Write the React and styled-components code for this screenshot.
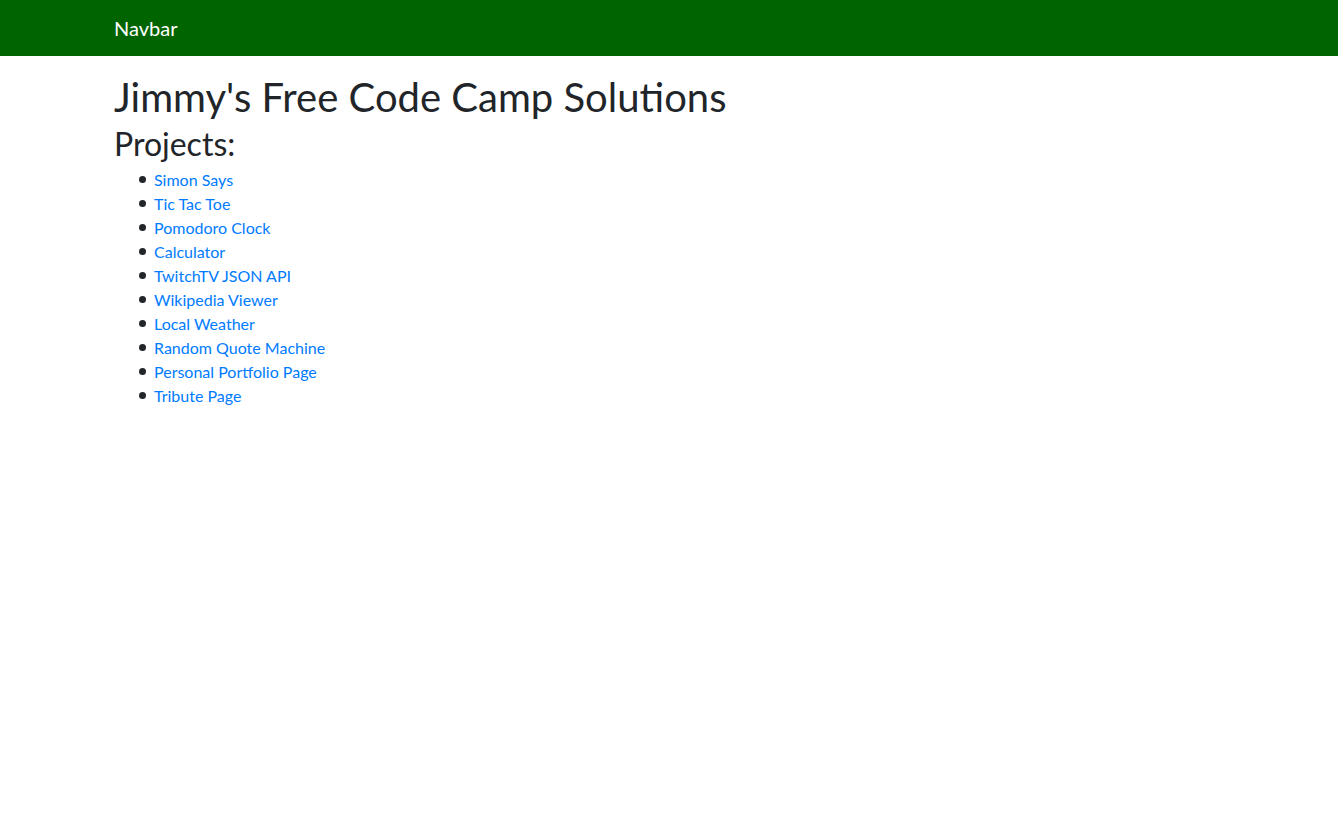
import React from "react";
import styled, { createGlobalStyle } from "styled-components";

const GlobalStyle = createGlobalStyle`
  *, *::before, *::after { box-sizing: border-box; }
  html, body { margin: 0; padding: 0; background: #fff; }
  body {
    font-family: Lato, "Open Sans", "Liberation Sans", sans-serif;
    font-size: 16px;
    line-height: 1.5;
    color: #212529;
  }
`;

const Navbar = styled.nav`
  background: #006400;
  height: 56px;
  display: flex;
  align-items: center;
  padding: 8px 16px;
`;

const Container = styled.div`
  width: 100%;
  max-width: 1140px;
  margin: 0 auto;
  padding: 0 15px;
`;

const NavContainer = styled(Container)`
  display: flex;
  align-items: center;
`;

const Brand = styled.a`
  color: #fff;
  font-size: 20px;
  line-height: 30px;
  padding: 5px 0;
  text-decoration: none;
  margin-right: 16px;
`;

const Title = styled.h1`
  margin: 17px 0 4px;
  font-size: 40px;
  font-weight: 400;
  line-height: 48px;
`;

const Subtitle = styled.h2`
  margin: 0 0 5px;
  font-size: 32px;
  font-weight: 400;
  line-height: 38px;
`;

const List = styled.ul`
  margin: 0 0 16px;
  padding-left: 25px;
  list-style: none;
`;

const Item = styled.li`
  display: flex;
  align-items: center;
  gap: 8px;
  line-height: 24px;
  &::before {
    content: "";
    width: 7px;
    height: 7px;
    border-radius: 50%;
    background: #212529;
    margin-top: -1px;
  }
`;

const Link = styled.a`
  color: #007bff;
  text-decoration: none;
`;

const projects = [
  "Simon Says",
  "Tic Tac Toe",
  "Pomodoro Clock",
  "Calculator",
  "TwitchTV JSON API",
  "Wikipedia Viewer",
  "Local Weather",
  "Random Quote Machine",
  "Personal Portfolio Page",
  "Tribute Page",
];

export default function App() {
  return (
    <>
      <GlobalStyle />
      <Navbar>
        <NavContainer>
          <Brand href="#">Navbar</Brand>
        </NavContainer>
      </Navbar>
      <Container>
        <Title>Jimmy's Free Code Camp Solutions</Title>
        <Subtitle>Projects:</Subtitle>
        <List>
          {projects.map((p) => (
            <Item key={p}>
              <Link href="#">{p}</Link>
            </Item>
          ))}
        </List>
      </Container>
    </>
  );
}
